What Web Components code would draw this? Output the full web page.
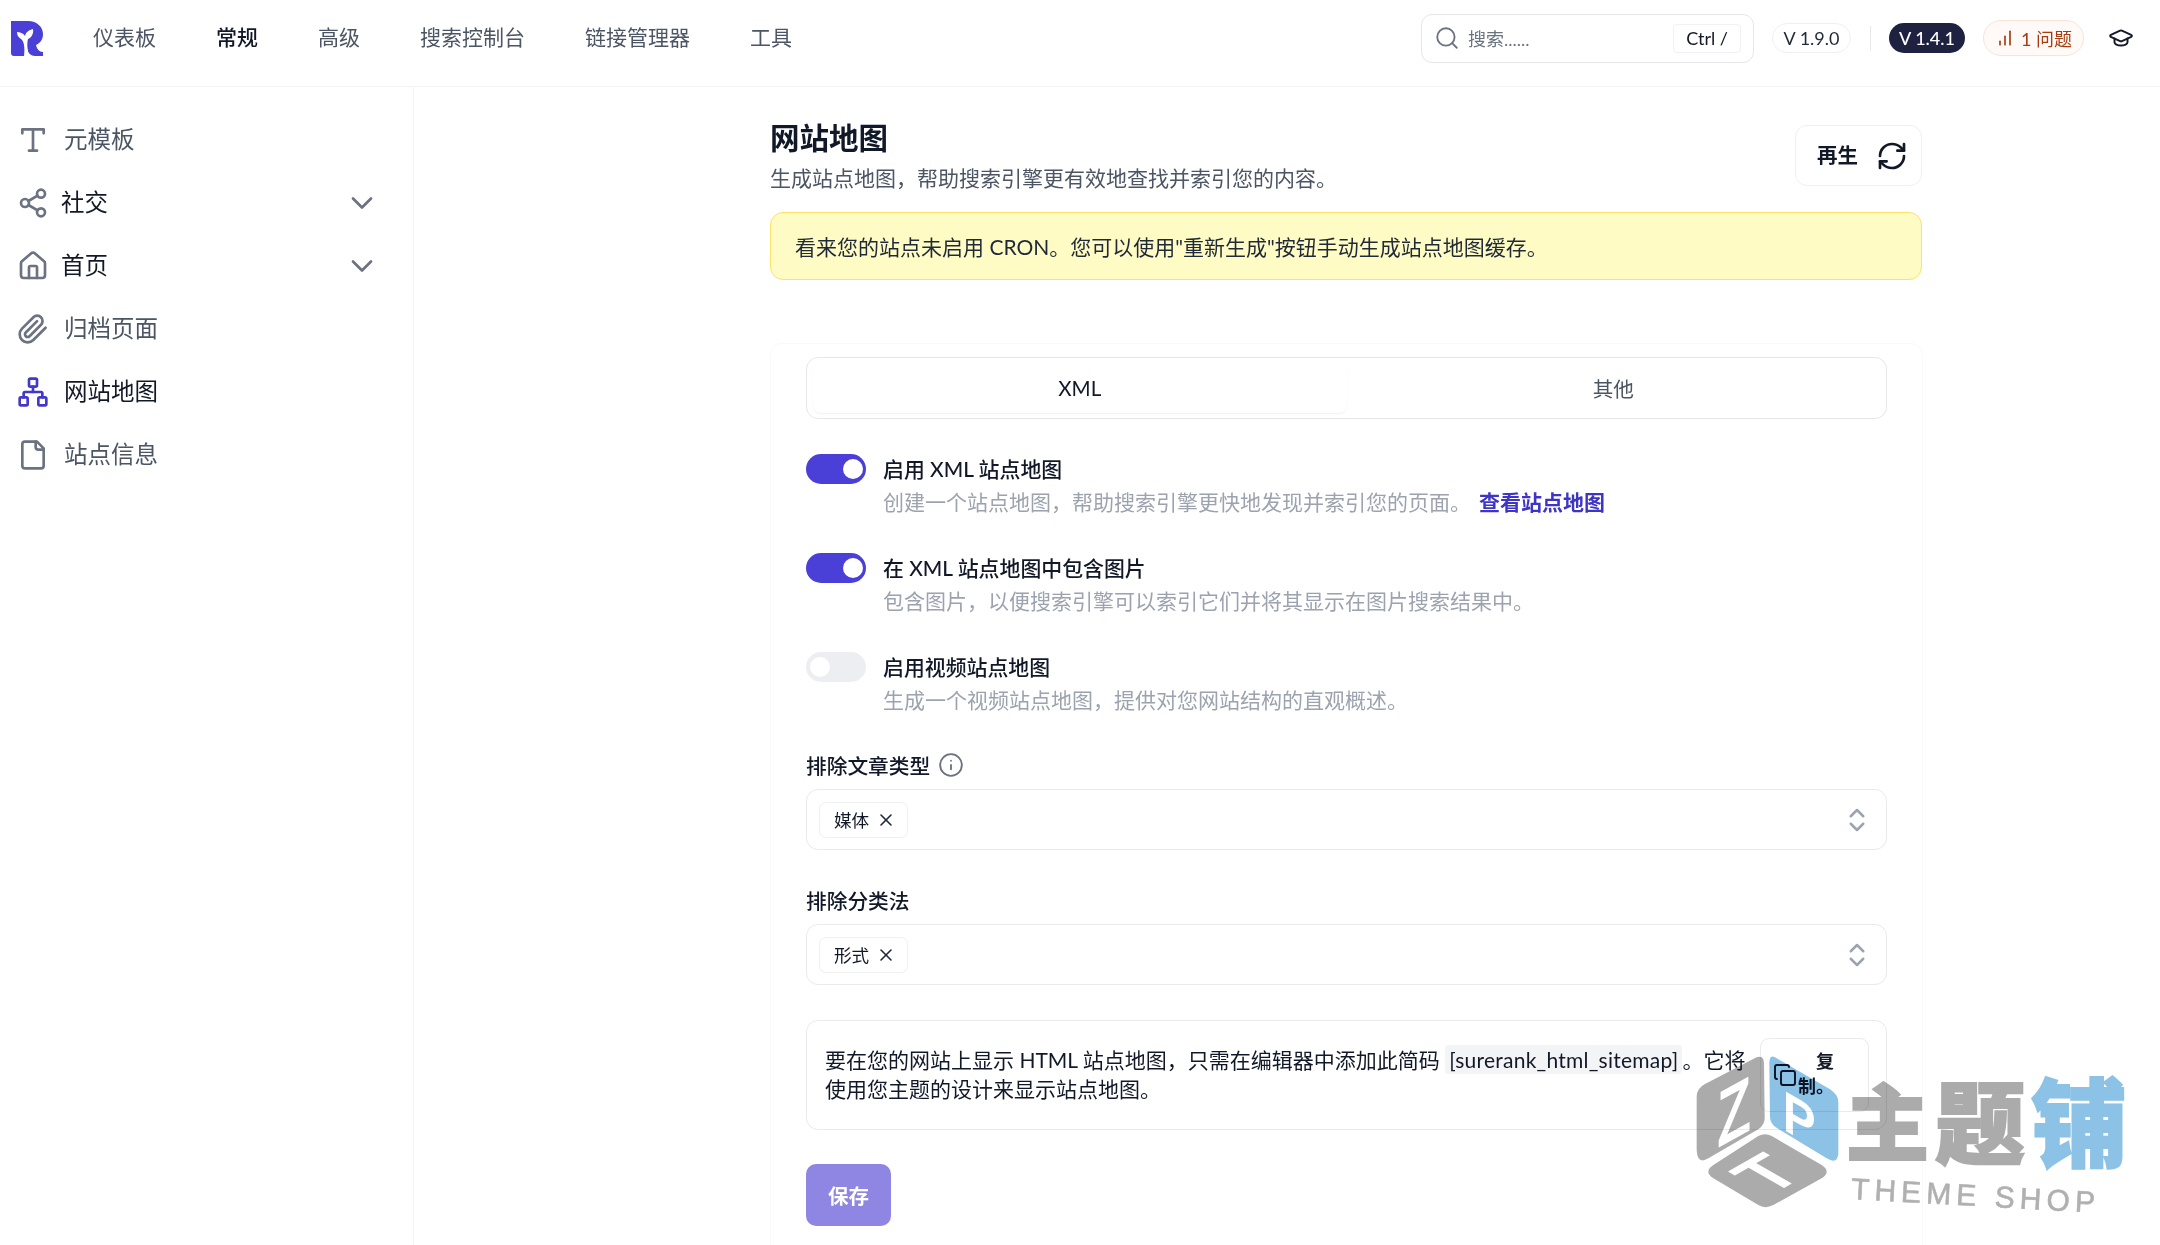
<!DOCTYPE html>
<html lang="zh-CN">
<head>
<meta charset="utf-8">
<title>网站地图</title>
<style>
  html, body { margin: 0; height: 1245px; overflow: hidden; background: #fff; }
  body {
    position: relative;
    font-family: Lato, "Noto Sans CJK SC", sans-serif;
    font-size: 21px;
    color: #111827;
  }
</style>
</head>
<body>
<app-shell>
  <top-bar slot="top"></top-bar>
  <side-nav slot="side">
    <side-item icon="type" muted>元模板</side-item>
    <side-item icon="share" group>社交</side-item>
    <side-item icon="home" group>首页</side-item>
    <side-item icon="clip" muted>归档页面</side-item>
    <side-item icon="network" active>网站地图</side-item>
    <side-item icon="file" muted>站点信息</side-item>
  </side-nav>
  <page-head heading="网站地图" sub="生成站点地图，帮助搜索引擎更有效地查找并索引您的内容。"></page-head>
  <notice-box>看来您的站点未启用 CRON。您可以使用"重新生成"按钮手动生成站点地图缓存。</notice-box>
  <form-card>
    <tab-switch first="XML" second="其他"></tab-switch>
    <toggle-list>
      <toggle-row on label="启用 XML 站点地图">创建一个站点地图，帮助搜索引擎更快地发现并索引您的页面。<a slot="link">查看站点地图</a></toggle-row>
      <toggle-row on label="在 XML 站点地图中包含图片">包含图片，以便搜索引擎可以索引它们并将其显示在图片搜索结果中。</toggle-row>
      <toggle-row label="启用视频站点地图">生成一个视频站点地图，提供对您网站结构的直观概述。</toggle-row>
    </toggle-list>
    <tag-select label="排除文章类型" tag="媒体" info></tag-select>
    <tag-select label="排除分类法" tag="形式"></tag-select>
    <note-box>要在您的网站上显示 HTML 站点地图，只需在编辑器中添加此简码 <code-chip>[surerank_html_sitemap]</code-chip>。它将<br>使用您主题的设计来显示站点地图。</note-box>
    <save-button>保存</save-button>
  </form-card>
</app-shell>
<water-mark></water-mark>

<script>
const ICONS = {
  type: '<path d="M4 7V4h16v3"/><path d="M9 20h6"/><path d="M12 4v16"/>',
  share: '<circle cx="18" cy="5" r="3"/><circle cx="6" cy="12" r="3"/><circle cx="18" cy="19" r="3"/><path d="m8.59 13.51 6.83 3.98"/><path d="m15.41 6.51-6.82 3.98"/>',
  home: '<path d="M15 21v-8a1 1 0 0 0-1-1h-4a1 1 0 0 0-1 1v8"/><path d="M3 10a2 2 0 0 1 .709-1.528l7-5.999a2 2 0 0 1 2.582 0l7 5.999A2 2 0 0 1 21 10v9a2 2 0 0 1-2 2H5a2 2 0 0 1-2-2z"/>',
  clip: '<path d="m21.44 11.05-9.19 9.19a6 6 0 0 1-8.49-8.49l8.57-8.57A4 4 0 1 1 18 8.84l-8.59 8.57a2 2 0 0 1-2.83-2.83l8.49-8.48"/>',
  network: '<rect x="16" y="16" width="6" height="6" rx="1"/><rect x="2" y="16" width="6" height="6" rx="1"/><rect x="9" y="2" width="6" height="6" rx="1"/><path d="M5 16v-3a1 1 0 0 1 1-1h12a1 1 0 0 1 1 1v3"/><path d="M12 12V8"/>',
  file: '<path d="M15 2H6a2 2 0 0 0-2 2v16a2 2 0 0 0 2 2h12a2 2 0 0 0 2-2V7Z"/><path d="M14 2v4a2 2 0 0 0 2 2h4"/>',
  chevron: '<path d="m6 9 6 6 6-6"/>',
  updown: '<path d="m7 15 5 5 5-5"/><path d="m7 9 5-5 5 5"/>',
  search: '<circle cx="11" cy="11" r="8"/><path d="m21 21-4.3-4.3"/>',
  bars: '<path d="M6 20v-4"/><path d="M12 20V10"/><path d="M18 20V4"/>',
  hat: '<path d="M21.42 10.922a1 1 0 0 0-.019-1.838L12.83 5.18a2 2 0 0 0-1.66 0L2.6 9.08a1 1 0 0 0 0 1.832l8.57 3.908a2 2 0 0 0 1.66 0z"/><path d="M6 12.5V16a6 3 0 0 0 12 0v-3.5"/>',
  refresh: '<path d="M3 12a9 9 0 0 1 9-9 9.75 9.75 0 0 1 6.74 2.74L21 8"/><path d="M21 3v5h-5"/><path d="M21 12a9 9 0 0 1-9 9 9.75 9.75 0 0 1-6.74-2.74L3 16"/><path d="M8 16H3v5"/>',
  info: '<circle cx="12" cy="12" r="10"/><path d="M12 16v-4"/><path d="M12 8h.01"/>',
  x: '<path d="M18 6 6 18"/><path d="m6 6 12 12"/>',
  copy: '<rect x="8" y="8" width="14" height="14" rx="2"/><path d="M4 16c-1.1 0-2-.9-2-2V4c0-1.1.9-2 2-2h10c1.1 0 2 .9 2 2"/>'
};

function svgIcon(name, size, color, stroke = 2) {
  return `<svg width="${size}" height="${size}" viewBox="0 0 24 24" fill="none" stroke="${color}" stroke-width="${stroke}" stroke-linecap="round" stroke-linejoin="round" style="display:block;flex:none">${ICONS[name]}</svg>`;
}

class ShadowBase extends HTMLElement {
  constructor() {
    super();
    this.attachShadow({ mode: 'open' });
  }
  connectedCallback() {
    this.shadowRoot.innerHTML = this.markup();
  }
}

class AppShell extends ShadowBase {
  markup() {
    return `
      <style>
        :host { display: block; width: 2160px; height: 1245px; overflow: hidden; }
        .body { display: flex; height: 1158px; }
        main { flex: 1; padding: 33px 0 0 356px; box-sizing: border-box; min-width: 0; }
        .col { width: 1153px; }
      </style>
      <slot name="top"></slot>
      <div class="body">
        <slot name="side"></slot>
        <main><div class="col"><slot></slot></div></main>
      </div>`;
  }
}

class TopBar extends ShadowBase {
  markup() {
    const links = ['仪表板', '常规', '高级', '搜索控制台', '链接管理器', '工具'];
    return `
      <style>
        :host { display: flex; align-items: center; height: 76px; border-bottom: 1px solid #f3f4f6; padding: 0 26px 10px 11px; box-sizing: content-box; }
        .logo { display: block; flex: none; }
        nav { display: flex; gap: 60px; margin: -4px 0 0 50px; font-size: 21px; color: #4b5563; }
        nav .cur { color: #111827; font-weight: 500; }
        .right { display: flex; align-items: center; margin-left: auto; font-size: 18px; }
        .search { display: flex; align-items: center; width: 333px; height: 49px; box-sizing: border-box; border: 1px solid #e5e7eb; border-radius: 11px; padding: 0 12px 0 12px; color: #6b7280; }
        .search span.ph { margin-left: 8px; }
        kbd { margin-left: auto; font: inherit; color: #111827; height: 29px; line-height: 27px; padding: 0 12px; border: 1px solid #f0f1f3; border-radius: 4px; box-sizing: border-box; }
        .pill { display: flex; align-items: center; justify-content: center; border-radius: 999px; box-sizing: border-box; }
        .ver { width: 79px; height: 30px; margin-left: 18px; border: 1px solid #eef0f2; color: #1f2937; }
        .sep { width: 1px; height: 24px; background: #e5e7eb; margin: 0 18px 0 19px; }
        .cur-ver { width: 76px; height: 30px; background: #1e2140; color: #fff; font-weight: 500; }
        .issue { width: 101px; height: 36px; margin-left: 18px; gap: 6px; border: 1px solid #fbe3d6; background: #fffaf7; color: #a63c12; }
        .hat { margin-left: 24px; }
      </style>
      <svg class="logo" width="32" height="35" viewBox="0 0 32 35">
        <path fill="#4a3fd6" d="M0 0H17C26 0 32 6 32 13C32 19 29 22 25 24C26 28 28 31 32 31V35H24C20 35 17 32 16 28H16V35H3C1 35 0 34 0 32Z"/>
        <path fill="#fff" d="M13 35C14 26 13 20 10 18C7 16 6 14 6 11C9 11 12 12 14 15C15 11 18 9 22 8C23 13 20 17 17 18C16 22 16 26 18 35Z"/>
      </svg>
      <nav>${links.map(l => `<span class="${l === '常规' ? 'cur' : ''}">${l}</span>`).join('')}</nav>
      <div class="right">
        <div class="search">
          ${svgIcon('search', 26, '#6b7280', 1.7)}
          <span class="ph">搜索......</span>
          <kbd>Ctrl /</kbd>
        </div>
        <div class="pill ver">V 1.9.0</div>
        <div class="sep"></div>
        <div class="pill cur-ver">V 1.4.1</div>
        <div class="pill issue">${svgIcon('bars', 20, '#a63c12', 2)}<span>1 问题</span></div>
        <div class="hat">${svgIcon('hat', 26, '#111827', 1.8)}</div>
      </div>`;
  }
}

class SideNav extends ShadowBase {
  markup() {
    return `
      <style>
        :host { display: flex; flex-direction: column; flex: none; width: 414px; box-sizing: border-box; padding-top: 21px; border-right: 1px solid #f3f4f6; }
      </style>
      <slot></slot>`;
  }
}

class SideItem extends ShadowBase {
  markup() {
    const active = this.hasAttribute('active');
    const group = this.hasAttribute('group');
    const muted = this.hasAttribute('muted');
    return `
      <style>
        :host { display: flex; align-items: center; height: 63px; padding: 0 33px 0 17px; font-size: 23.5px; gap: ${group ? 12 : 15}px; color: ${muted ? '#4b5563' : '#111827'}; }
        .label { margin-top: -3px; }
        .chev { margin-left: auto; }
      </style>
      ${svgIcon(this.getAttribute('icon'), 32, active ? '#4338ca' : '#6b7280', 2)}
      <span class="label"><slot></slot></span>
      ${group ? `<span class="chev">${svgIcon('chevron', 36, '#6b7280', 1.8)}</span>` : ''}`;
  }
}

class PageHead extends ShadowBase {
  markup() {
    return `
      <style>
        :host { display: flex; justify-content: space-between; align-items: flex-start; }
        h1 { margin: 0; font-size: 29.5px; line-height: 36px; font-weight: 700; color: #111827; }
        p { margin: 7px 0 0; font-size: 21px; line-height: 30px; color: #4b5563; }
        .regen { display: flex; align-items: center; gap: 18px; width: 127px; height: 61px; margin-top: 5px; margin-right: 1px; padding-left: 21px; box-sizing: border-box; border: 1px solid #eef0f2; border-radius: 12px; font-size: 20.5px; font-weight: 600; }
        .regen span { margin-top: -4px; }
      </style>
      <div>
        <h1>${this.getAttribute('heading')}</h1>
        <p>${this.getAttribute('sub')}</p>
      </div>
      <div class="regen"><span>再生</span>${svgIcon('refresh', 32, '#111827', 2)}</div>`;
  }
}

class NoticeBox extends ShadowBase {
  markup() {
    return `
      <style>
        :host { display: flex; align-items: center; height: 68px; margin: 19px 1px 0 0; padding: 0 24px; box-sizing: border-box; background: #fffbc4; border: 1px solid #fbe36a; border-radius: 13px; font-size: 21px; color: #1f2937; }
      </style>
      <slot></slot>`;
  }
}

class FormCard extends ShadowBase {
  markup() {
    return `
      <style>
        :host { display: flex; flex-direction: column; gap: 35px; margin-top: 63px; padding: 13px 35px 36px; border: 1px solid #f9f9fa; border-radius: 12px; box-sizing: border-box; }
      </style>
      <slot></slot>`;
  }
}

class TabSwitch extends ShadowBase {
  markup() {
    return `
      <style>
        :host { display: grid; grid-template-columns: 1fr 1fr; height: 62px; padding: 6px 6px 5px; box-sizing: border-box; border: 1px solid #e5e7eb; border-radius: 12px; font-size: 20.6px; }
        div { display: flex; align-items: center; justify-content: center; border-radius: 8px; padding-bottom: 2px; }
        .on { color: #111827; box-shadow: 0 1px 2px rgba(0,0,0,.06); }
        .off { color: #4b5563; }
      </style>
      <div class="on">${this.getAttribute('first')}</div>
      <div class="off">${this.getAttribute('second')}</div>`;
  }
}

class ToggleList extends ShadowBase {
  markup() {
    return `
      <style>:host { display: flex; flex-direction: column; gap: 36px; }</style>
      <slot></slot>`;
  }
}

class ToggleRow extends ShadowBase {
  markup() {
    const on = this.hasAttribute('on');
    return `
      <style>
        :host { display: flex; gap: 17px; align-items: flex-start; }
        .track { position: relative; flex: none; width: 60px; height: 30px; border-radius: 15px; background: ${on ? '#4a3fd6' : '#eceef1'}; }
        .knob { position: absolute; top: 5px; ${on ? 'right: 3px' : 'left: 4px'}; width: 20px; height: 20px; border-radius: 50%; background: #fff; }
        .label { font-size: 20.9px; line-height: 30px; font-weight: 500; color: #111827; }
        .desc { margin-top: 3px; font-size: 21px; line-height: 30px; color: #9ca3af; }
        ::slotted(a) { margin-left: 8px; color: #3f35c4; font-weight: 600; }
      </style>
      <div class="track"><div class="knob"></div></div>
      <div>
        <div class="label">${this.getAttribute('label')}</div>
        <div class="desc"><slot></slot><slot name="link"></slot></div>
      </div>`;
  }
}

class TagSelect extends ShadowBase {
  markup() {
    return `
      <style>
        :host { display: block; }
        .head { display: flex; align-items: center; gap: 8px; height: 30px; font-size: 20.7px; font-weight: 500; margin-bottom: 9px; }
        .box { display: flex; align-items: center; justify-content: space-between; height: 61px; padding: 0 14px 0 12px; box-sizing: border-box; border: 1px solid #e8eaed; border-radius: 12px; }
        .tag { display: flex; align-items: center; gap: 7px; height: 36px; width: 89px; box-sizing: border-box; padding: 0 5px 0 14px; border: 1px solid #eef0f2; border-radius: 7px; font-size: 17.6px; }
      </style>
      <div class="head"><span>${this.getAttribute('label')}</span>${this.hasAttribute('info') ? svgIcon('info', 26, '#6b7280', 1.7) : ''}</div>
      <div class="box">
        <span class="tag"><span>${this.getAttribute('tag')}</span>${svgIcon('x', 20, '#1f2937', 1.9)}</span>
        ${svgIcon('updown', 30, '#9ca3af', 2)}
      </div>`;
  }
}

class CodeChip extends ShadowBase {
  markup() {
    return `
      <style>:host { display: inline-block; background: #f3f4f6; border-radius: 4px; padding: 0 4px; line-height: 29px; letter-spacing: .24px; }</style>
      <slot></slot>`;
  }
}

class NoteBox extends ShadowBase {
  markup() {
    return `
      <style>
        :host { display: flex; gap: 10px; align-items: flex-start; height: 110px; box-sizing: border-box; padding: 17px 17px 0 18px; border: 1px solid #e8eaed; border-radius: 12px; font-size: 21px; line-height: 29px; color: #111827; }
        .txt { flex: 1; min-width: 0; margin-top: 7px; white-space: nowrap; }
        .copy { display: flex; align-items: center; flex: none; width: 109px; height: 74px; box-sizing: border-box; padding: 0 34px 0 12px; border: 1px solid #e8eaed; border-radius: 9px; font-size: 18px; line-height: 25px; font-weight: 600; text-align: right; }
        .copy span { width: 36px; margin-left: auto; margin-top: -3px; }
      </style>
      <div class="txt"><slot></slot></div>
      <div class="copy">${svgIcon('copy', 24, '#111827', 1.9)}<span>复制。</span></div>`;
  }
}

class SaveButton extends ShadowBase {
  markup() {
    return `
      <style>
        :host { display: flex; align-items: center; justify-content: center; width: 85px; height: 62px; margin-top: -1px; background: #8f85e3; color: #fff; border-radius: 10px; font-size: 20.5px; font-weight: 700; }
      </style>
      <slot></slot>`;
  }
}

class WaterMark extends ShadowBase {
  markup() {
    return `
      <style>
        :host { position: absolute; left: 1690px; top: 1050px; width: 470px; height: 170px; mix-blend-mode: multiply; pointer-events: none; }
        svg { position: absolute; left: 0; top: 0; }
        .zh { position: absolute; left: 156px; top: 12px; display: flex; align-items: center; gap: 6px; height: 112px; font-family: "Noto Sans CJK SC", sans-serif; font-weight: 900; line-height: 1; color: #ababab; -webkit-text-stroke: 2px currentColor; }
        .zh span { display: block; }
        .en { position: absolute; left: 162px; top: 122px; font-family: "Liberation Sans", sans-serif; font-size: 30px; letter-spacing: 5.1px; color: #b0b0b0; -webkit-text-stroke: .6px currentColor; white-space: nowrap; transform: rotate(3.2deg); transform-origin: left top; }
      </style>
      <svg width="160" height="165" viewBox="0 0 480 495">
        <path fill="#ababab" d="M200 22Q222 15 222 40L224 205Q224 225 205 238L55 325Q22 345 20 300L20 140Q20 115 45 102Z"/>
        <path fill="#8bc2e5" d="M255 22L420 118Q445 135 445 155L445 310Q443 345 410 325L262 235Q240 222 240 200L238 40Q238 12 255 22Z"/>
        <path fill="#ababab" d="M205 258Q225 248 245 258L395 345Q425 365 395 385L250 465Q225 478 205 465L70 385Q40 365 70 345Z"/>
        <g fill="#fff" stroke="#fff" stroke-width="8" font-family="Liberation Sans, sans-serif">
          <text font-size="226" text-anchor="middle" transform="matrix(.7 -.385 0 1 132 263)">Z</text>
          <text font-size="160" transform="matrix(.9 .5 0 1 280 235)">P</text>
          <text font-size="200" text-anchor="middle" transform="matrix(.87 -.5 .87 .5 290 405)">T</text>
        </g>
      </svg>
      <div class="zh">
        <span style="font-size:83px">主</span>
        <span style="font-size:90px">题</span>
        <span style="font-size:96px;color:#8bc2e5">铺</span>
      </div>
      <div class="en">THEME SHOP</div>`;
  }
}

customElements.define('app-shell', AppShell);
customElements.define('top-bar', TopBar);
customElements.define('side-nav', SideNav);
customElements.define('side-item', SideItem);
customElements.define('page-head', PageHead);
customElements.define('notice-box', NoticeBox);
customElements.define('form-card', FormCard);
customElements.define('tab-switch', TabSwitch);
customElements.define('toggle-list', ToggleList);
customElements.define('toggle-row', ToggleRow);
customElements.define('tag-select', TagSelect);
customElements.define('code-chip', CodeChip);
customElements.define('note-box', NoteBox);
customElements.define('save-button', SaveButton);
customElements.define('water-mark', WaterMark);
</script>
</body>
</html>
